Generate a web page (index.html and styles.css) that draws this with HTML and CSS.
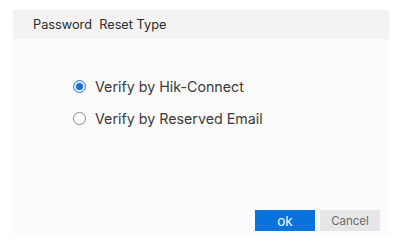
FILE: index.html
```html
<!DOCTYPE html>
<html>
<head>
<meta charset="utf-8">
<link rel="stylesheet" href="styles.css">
</head>
<body>
<div class="dialog">
  <div class="header">Password&nbsp; Reset Type</div>
  <div class="content">
    <div class="options">
      <label class="option">
        <span class="radio checked"><span class="dot"></span></span>
        <span class="label">Verify by Hik-Connect</span>
      </label>
      <label class="option">
        <span class="radio"></span>
        <span class="label">Verify by Reserved Email</span>
      </label>
    </div>
    <div class="footer">
      <button class="btn primary">ok</button>
      <button class="btn secondary">Cancel</button>
    </div>
  </div>
</div>
</body>
</html>
```
FILE: styles.css
```css
html, body {
  margin: 0;
  padding: 0;
  background: #ffffff;
}
body {
  font-family: "Inter", "Noto Sans", sans-serif;
  color: #333333;
  padding: 10px 0 0 13px;
}
.dialog {
  width: 376px;
  display: flex;
  flex-direction: column;
}
.header {
  height: 29px;
  background: #f3f3f3;
  padding-left: 20px;
  font-size: 12.75px;
  line-height: 29px;
  color: #2b2b2b;
}
.content {
  background: #fbfbfd;
  height: 196px;
  display: flex;
  flex-direction: column;
}
.options {
  padding: 37px 0 0 60px;
  display: flex;
  flex-direction: column;
  gap: 12px;
}
.option {
  display: flex;
  align-items: center;
  gap: 9px;
  height: 20px;
  font-size: 14.25px;
  color: #3a3a3a;
}
.radio {
  box-sizing: border-box;
  width: 13px;
  height: 13px;
  border-radius: 50%;
  border: 1px solid #8a8a8a;
  background: #ffffff;
  display: flex;
  align-items: center;
  justify-content: center;
}
.radio.checked {
  border-color: #2f7de1;
  background: #dbe9fb;
}
.dot {
  width: 7px;
  height: 7px;
  border-radius: 50%;
  background: #1a6fdc;
}
.footer {
  margin-top: auto;
  display: flex;
  justify-content: flex-end;
  gap: 5px;
  padding: 0 9px 4px 0;
}
.btn {
  width: 60px;
  height: 21px;
  border: none;
  padding: 0;
  font-family: "Inter", "Noto Sans", sans-serif;
}
.primary {
  background: #0a72dc;
  color: #ffffff;
  font-size: 13.5px;
}
.secondary {
  background: #e6e6e8;
  color: #6a6a6a;
  font-size: 11.5px;
}
```
